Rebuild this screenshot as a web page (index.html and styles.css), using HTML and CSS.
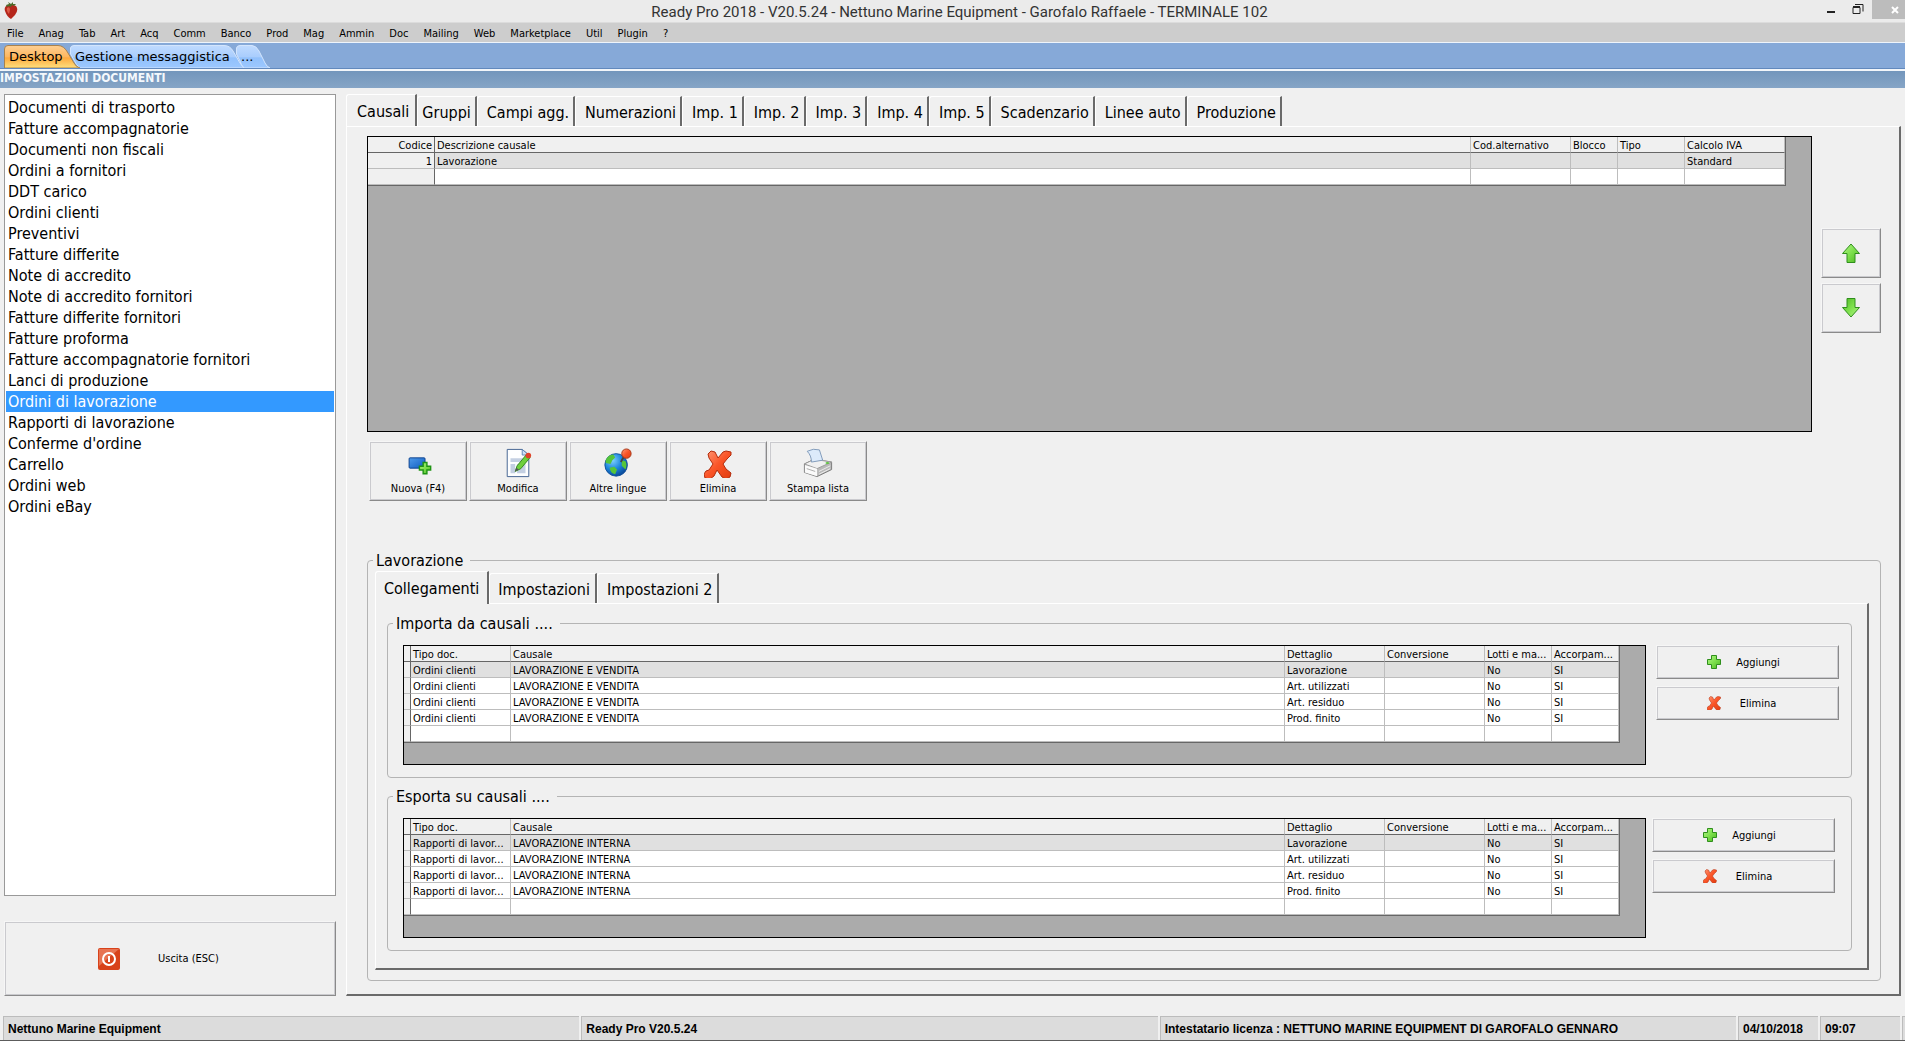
FILE: index.html
```html
<!DOCTYPE html>
<html lang="it">
<head>
  <meta charset="UTF-8">
  <meta name="viewport" content="width=device-width, initial-scale=1.0">
  <title>Ready Pro 2018 - Impostazioni documenti</title>
  <link rel="stylesheet" href="styles.css">
</head>
<body>
  <!-- shared icons -->
  <svg class="sprite" aria-hidden="true">
    <defs>
      <linearGradient id="green" x1="0" y1="0" x2="1" y2="1">
        <stop offset="0" stop-color="#b4f58a"/>
        <stop offset="0.5" stop-color="#7de04c"/>
        <stop offset="1" stop-color="#4cb522"/>
      </linearGradient>
      <linearGradient id="red" x1="0" y1="0" x2="1" y2="1">
        <stop offset="0" stop-color="#ff9a78"/>
        <stop offset="0.5" stop-color="#fa5528"/>
        <stop offset="1" stop-color="#e03c10"/>
      </linearGradient>
      <linearGradient id="blue" x1="0" y1="0" x2="1" y2="1">
        <stop offset="0" stop-color="#4f9bea"/>
        <stop offset="1" stop-color="#0f5cc0"/>
      </linearGradient>
      <linearGradient id="orangeTab" x1="0" y1="0" x2="0" y2="1">
        <stop offset="0" stop-color="#fdcf94"/>
        <stop offset="0.5" stop-color="#fdb75f"/>
        <stop offset="0.55" stop-color="#fda93f"/>
        <stop offset="1" stop-color="#fee07e"/>
      </linearGradient>
      <linearGradient id="blueTab" x1="0" y1="0" x2="0" y2="1">
        <stop offset="0" stop-color="#c0dbff"/>
        <stop offset="0.5" stop-color="#a9cdfd"/>
        <stop offset="0.55" stop-color="#91c0fb"/>
        <stop offset="1" stop-color="#9cc8ff"/>
      </linearGradient>
      <radialGradient id="sea" cx="0.35" cy="0.3" r="0.8">
        <stop offset="0" stop-color="#7fd0ff"/>
        <stop offset="0.5" stop-color="#1b86dc"/>
        <stop offset="1" stop-color="#063c8c"/>
      </radialGradient>
    </defs>
    <symbol id="plus" viewBox="0 0 14 14">
      <path d="M4.5 0.5h5v4h4v5h-4v4h-5v-4h-4v-5h4z" fill="url(#green)" stroke="#2f8f1c"/>
    </symbol>
    <symbol id="cross" viewBox="0 0 28 28">
      <path d="M4 4 7 1l4 1 3 6 5-6 3-1 5 1v3l-4 4-4 5 3 5 5 4-1 4-4 2-4-2-5-7-3 6-4 3-5-1-1-4 2-3 3-1 4-6-4-6z" fill="url(#red)" stroke="#b32c0c" stroke-linejoin="round"/>
    </symbol>
    <symbol id="arrow" viewBox="0 0 20 20">
      <path d="M10 1 18.500 10.500H14V19.500H6V10.500H1.500z" fill="url(#green)" stroke="#2f8f1c"/>
    </symbol>
  </svg>

  <header class="titlebar">
    <svg class="logo" viewBox="0 0 14 18">
      <path d="M2 4Q7 1 12 4 15 8 11 13L7 17Q3 15 1 9 0 6 2 4z" fill="#b5261b"/>
      <path d="M3 6Q6 4 6 8L5 12Q2 9 3 6z" fill="#dc5a47"/>
      <path d="M2 3 5 2 4 0 7 2 9 0 9 2 12 2 10 4 8 3 7 5 5 4 3 5z" fill="#4d6b2a"/>
    </svg>
    <h1>Ready Pro 2018 - V20.5.24 - Nettuno Marine Equipment - Garofalo Raffaele - TERMINALE 102</h1>
    <div class="window-buttons">
      <button aria-label="Riduci a icona"><svg width="10" height="12" viewBox="0 0 10 12"><path d="M1 8h8v2H1z" fill="#222"/></svg></button>
      <button aria-label="Ripristina"><svg width="12" height="12" viewBox="0 0 12 12"><path d="M1 4.500h7v6H1zM1 3.500h7M3 1.500h8v7" fill="none" stroke="#222"/></svg></button>
      <button class="close" aria-label="Chiudi"><svg width="8" height="8" viewBox="0 0 8 8"><path d="M1 1 7 7M7 1 1 7" stroke="#fff" stroke-width="2"/></svg></button>
    </div>
  </header>

  <nav class="menubar">
    <a href="#">File</a>
    <a href="#">Anag</a>
    <a href="#">Tab</a>
    <a href="#">Art</a>
    <a href="#">Acq</a>
    <a href="#">Comm</a>
    <a href="#">Banco</a>
    <a href="#">Prod</a>
    <a href="#">Mag</a>
    <a href="#">Ammin</a>
    <a href="#">Doc</a>
    <a href="#">Mailing</a>
    <a href="#">Web</a>
    <a href="#">Marketplace</a>
    <a href="#">Util</a>
    <a href="#">Plugin</a>
    <a href="#">?</a>
  </nav>

  <div class="desktop-tabs">
    <button class="dtab dtab-active">
      <svg width="76" height="23" viewBox="0 0 76 23"><path d="M0.500 23V4Q0.500 0.500 4 0.500H54Q60 0.500 64 8L70 18Q72 22 76 23z" fill="url(#orangeTab)" stroke="#a8824e"/></svg>
      <span>Desktop</span>
    </button>
    <button class="dtab dtab-wide">
      <svg width="176" height="23" viewBox="0 0 176 23"><path d="M0.500 3Q1 0.500 4 0.500H154Q160 0.500 163 6L170 18Q172 22 176 23H10Q6 20 4 15L0.500 9z" fill="url(#blueTab)" stroke="#d3e5fd"/></svg>
      <span>Gestione messaggistica</span>
    </button>
    <button class="dtab dtab-more">
      <svg width="34" height="23" viewBox="0 0 34 23"><path d="M0.500 9V3Q1 0.500 4 0.500H16Q20 0.500 23 6L29 18Q31 22 34 23H8Q5 20 4 16z" fill="url(#blueTab)" stroke="#d3e5fd"/></svg>
      <span>...</span>
    </button>
  </div>

  <h2 class="section-title">IMPOSTAZIONI DOCUMENTI</h2>

  <main>
    <aside class="sidebar">
      <ul class="doc-list">
        <li><a href="#">Documenti di trasporto</a></li>
        <li><a href="#">Fatture accompagnatorie</a></li>
        <li><a href="#">Documenti non fiscali</a></li>
        <li><a href="#">Ordini a fornitori</a></li>
        <li><a href="#">DDT carico</a></li>
        <li><a href="#">Ordini clienti</a></li>
        <li><a href="#">Preventivi</a></li>
        <li><a href="#">Fatture differite</a></li>
        <li><a href="#">Note di accredito</a></li>
        <li><a href="#">Note di accredito fornitori</a></li>
        <li><a href="#">Fatture differite fornitori</a></li>
        <li><a href="#">Fatture proforma</a></li>
        <li><a href="#">Fatture accompagnatorie fornitori</a></li>
        <li><a href="#">Lanci di produzione</a></li>
        <li><a href="#" class="selected">Ordini di lavorazione</a></li>
        <li><a href="#">Rapporti di lavorazione</a></li>
        <li><a href="#">Conferme d'ordine</a></li>
        <li><a href="#">Carrello</a></li>
        <li><a href="#">Ordini web</a></li>
        <li><a href="#">Ordini eBay</a></li>
      </ul>
      <button class="btn exit">
        <svg width="22" height="22" viewBox="0 0 22 22">
          <rect width="22" height="22" rx="2" fill="#d8421a"/>
          <path d="M1 1h20L1 18z" fill="#ee8a6c" opacity="0.7"/>
          <circle cx="11" cy="11" r="6" fill="none" stroke="#fff" stroke-width="2"/>
          <path d="M11 8v6" stroke="#fff" stroke-width="2"/>
        </svg>
        <span>Uscita (ESC)</span>
      </button>
    </aside>

    <section class="workspace">
      <div class="tabs">
        <button class="tab active">Causali</button>
        <button class="tab">Gruppi</button>
        <button class="tab">Campi agg.</button>
        <button class="tab">Numerazioni</button>
        <button class="tab">Imp. 1</button>
        <button class="tab">Imp. 2</button>
        <button class="tab">Imp. 3</button>
        <button class="tab">Imp. 4</button>
        <button class="tab">Imp. 5</button>
        <button class="tab">Scadenzario</button>
        <button class="tab">Linee auto</button>
        <button class="tab">Produzione</button>
      </div>

      <div class="panel panel-main">
        <div class="causali">
          <div class="grid-box">
            <table class="grid">
              <colgroup>
                <col class="w-67"><col><col class="w-100"><col class="w-47"><col class="w-67"><col class="w-100">
              </colgroup>
              <thead>
                <tr><th class="num">Codice</th><th>Descrizione causale</th><th>Cod.alternativo</th><th>Blocco</th><th>Tipo</th><th>Calcolo IVA</th></tr>
              </thead>
              <tbody>
                <tr class="current"><td class="num">1</td><td>Lavorazione</td><td></td><td></td><td></td><td>Standard</td></tr>
                <tr><td></td><td></td><td></td><td></td><td></td><td></td></tr>
              </tbody>
            </table>
          </div>
          <div class="order-buttons">
            <button class="btn" aria-label="Sposta su"><svg width="20" height="20"><use href="#arrow"/></svg></button>
            <button class="btn" aria-label="Sposta giù"><svg class="down" width="20" height="20"><use href="#arrow"/></svg></button>
          </div>
        </div>

        <div class="toolbar">
          <button class="btn">
            <svg width="32" height="32" viewBox="0 0 32 32">
              <rect x="6.500" y="10.500" width="17" height="11" rx="1" fill="url(#blue)" stroke="#0b3f8c"/>
              <path d="M21.500 15.500h4v4h4v4h-4v4h-4v-4h-4v-4h4z" fill="url(#green)" stroke="#1f9413" stroke-width="1.500"/>
            </svg>
            <span>Nuova (F4)</span>
          </button>
          <button class="btn">
            <svg width="32" height="32" viewBox="0 0 32 32">
              <path d="M4.500 1.500h16l7 6v23h-23z" fill="#fdfeff" stroke="#3f5f8f"/>
              <path d="M20.500 1.500v6h7z" fill="#cfe0f5" stroke="#5f86b8"/>
              <path d="M8 11h15v4H8zM8 17h5v10H8zM15 17h9v10h-9z" fill="#c3cfe2"/>
              <path d="M13 25 15 19 25 7 29 10 19 22z" fill="#6fd03e" stroke="#33861f"/>
              <path d="M13 25 14 21 17 23z" fill="#555"/>
              <circle cx="27" cy="8" r="3" fill="#e0432a"/>
            </svg>
            <span>Modifica</span>
          </button>
          <button class="btn">
            <svg width="32" height="32" viewBox="0 0 32 32">
              <circle cx="14" cy="18" r="12" fill="url(#sea)" stroke="#10509c"/>
              <path d="M4 11Q7 7 11 7L13 10 10 13 8 17 3 16Q2 14 4 11zM20 13 24 14Q26 18 24 23L20 19zM7 21 12 20 15 23 13 28Q8 27 7 21z" fill="#55c53a"/>
              <path d="M19 15 23 8" stroke="#444" stroke-width="2"/>
              <circle cx="25" cy="6" r="5" fill="url(#red)" stroke="#a3371a"/>
            </svg>
            <span>Altre lingue</span>
          </button>
          <button class="btn">
            <svg width="32" height="32"><use href="#cross" x="2" y="2" width="28" height="28"/></svg>
            <span>Elimina</span>
          </button>
          <button class="btn">
            <svg width="32" height="32" viewBox="0 0 32 32">
              <path d="M1.500 17 12 12 30.500 15V23L15 30.500 1.500 26z" fill="#b9b9b9" stroke="#777"/>
              <path d="M1.500 17 12 12 30.500 15 15 22z" fill="#f0f0f0" stroke="#999"/>
              <path d="M2 18 15 22V30L2 26z" fill="#fafafa"/>
              <path d="M4 22 13 25" stroke="#aaa"/>
              <path d="M17 25 29 19M17 28 29 22" stroke="#eee"/>
              <path d="M4.500 3.500Q11 0 17.500 2L21 13 9 15Q9 8 4.500 3.500z" fill="#dceafa" stroke="#7d98b8"/>
              <ellipse cx="26" cy="16" rx="2" ry="1" fill="#5fc340"/>
            </svg>
            <span>Stampa lista</span>
          </button>
        </div>

        <fieldset class="group lavorazione">
          <legend>Lavorazione</legend>
          <div class="tabs">
            <button class="tab active">Collegamenti</button>
            <button class="tab">Impostazioni</button>
            <button class="tab">Impostazioni 2</button>
          </div>
          <div class="panel panel-links">
            <fieldset class="group link-group">
              <legend>Importa da causali ....</legend>
              <div class="grid-box">
                <table class="grid">
                  <colgroup>
                    <col class="w-7"><col class="w-100"><col><col class="w-100"><col class="w-100"><col class="w-67"><col class="w-67">
                  </colgroup>
                  <thead>
                    <tr><th></th><th>Tipo doc.</th><th>Causale</th><th>Dettaglio</th><th>Conversione</th><th>Lotti e ma...</th><th>Accorpam...</th></tr>
                  </thead>
                  <tbody>
                    <tr class="current"><td></td><td>Ordini clienti</td><td>LAVORAZIONE E VENDITA</td><td>Lavorazione</td><td></td><td>No</td><td>SI</td></tr>
                    <tr><td></td><td>Ordini clienti</td><td>LAVORAZIONE E VENDITA</td><td>Art. utilizzati</td><td></td><td>No</td><td>SI</td></tr>
                    <tr><td></td><td>Ordini clienti</td><td>LAVORAZIONE E VENDITA</td><td>Art. residuo</td><td></td><td>No</td><td>SI</td></tr>
                    <tr><td></td><td>Ordini clienti</td><td>LAVORAZIONE E VENDITA</td><td>Prod. finito</td><td></td><td>No</td><td>SI</td></tr>
                    <tr><td></td><td></td><td></td><td></td><td></td><td></td><td></td></tr>
                  </tbody>
                </table>
              </div>
              <div class="side-buttons">
                <button class="btn"><svg width="14" height="14"><use href="#plus"/></svg><span>Aggiungi</span></button>
                <button class="btn"><svg width="14" height="14"><use href="#cross"/></svg><span>Elimina</span></button>
              </div>
            </fieldset>

            <fieldset class="group link-group export">
              <legend>Esporta su causali ....</legend>
              <div class="grid-box">
                <table class="grid">
                  <colgroup>
                    <col class="w-7"><col class="w-100"><col><col class="w-100"><col class="w-100"><col class="w-67"><col class="w-67">
                  </colgroup>
                  <thead>
                    <tr><th></th><th>Tipo doc.</th><th>Causale</th><th>Dettaglio</th><th>Conversione</th><th>Lotti e ma...</th><th>Accorpam...</th></tr>
                  </thead>
                  <tbody>
                    <tr class="current"><td></td><td>Rapporti di lavor...</td><td>LAVORAZIONE INTERNA</td><td>Lavorazione</td><td></td><td>No</td><td>SI</td></tr>
                    <tr><td></td><td>Rapporti di lavor...</td><td>LAVORAZIONE INTERNA</td><td>Art. utilizzati</td><td></td><td>No</td><td>SI</td></tr>
                    <tr><td></td><td>Rapporti di lavor...</td><td>LAVORAZIONE INTERNA</td><td>Art. residuo</td><td></td><td>No</td><td>SI</td></tr>
                    <tr><td></td><td>Rapporti di lavor...</td><td>LAVORAZIONE INTERNA</td><td>Prod. finito</td><td></td><td>No</td><td>SI</td></tr>
                    <tr><td></td><td></td><td></td><td></td><td></td><td></td><td></td></tr>
                  </tbody>
                </table>
              </div>
              <div class="side-buttons">
                <button class="btn"><svg width="14" height="14"><use href="#plus"/></svg><span>Aggiungi</span></button>
                <button class="btn"><svg width="14" height="14"><use href="#cross"/></svg><span>Elimina</span></button>
              </div>
            </fieldset>
          </div>
        </fieldset>
      </div>
    </section>
  </main>

  <footer class="statusbar">
    <div>Nettuno Marine Equipment</div>
    <div>Ready Pro V20.5.24</div>
    <div>Intestatario licenza : NETTUNO MARINE EQUIPMENT DI GAROFALO GENNARO</div>
    <div>04/10/2018</div>
    <div>09:07</div>
    <div></div>
  </footer>
</body>
</html>
```
FILE: styles.css
```css
* {
  box-sizing: border-box;
}
body {
  display: flex;
  flex-direction: column;
  min-height: 100vh;
  margin: 0;
  background-color: #f0f0f0;
  color: #000;
  border-bottom: 1px solid #5c5c5c;
  font-family: "DejaVu Sans Condensed", "DejaVu Sans", sans-serif;
  font-size: 11px;
}
a {
  color: inherit;
  text-decoration: none;
}
button {
  font: inherit;
  color: inherit;
  padding: 0;
  border: none;
  background: none;
}
svg {
  display: block;
}
.sprite {
  position: absolute;
  width: 0;
  height: 0;
}

/* title bar */
.titlebar {
  display: grid;
  grid-template-columns: 120px 1fr 106px;
  height: 23px;
  background-color: #ebebeb;
  border-bottom: 1px solid #dcdcdc;
}
.logo {
  width: 14px;
  height: 18px;
  margin: 2px 0 0 4px;
}
.titlebar h1 {
  margin: 0;
  font: 15px/24px Roboto, sans-serif;
  color: #333;
  text-align: center;
}
.window-buttons {
  display: flex;
  justify-content: flex-end;
  align-items: flex-start;
  gap: 16px;
}
.window-buttons button {
  padding-top: 3px;
}
.window-buttons .close {
  width: 33px;
  height: 19px;
  padding: 0 0 0 19px;
  margin-left: -8px;
  background-color: #bcbcbc;
}

.menubar {
  display: flex;
  gap: 15px;
  height: 19px;
  padding-left: 7px;
  background-color: #cdcdcd;
  line-height: 21px;
}

/* open windows */
.desktop-tabs {
  display: flex;
  align-items: flex-end;
  height: 27px;
  padding-left: 4px;
  background-color: #86a9d8;
  border-top: 1px solid #eef4fb;
  border-bottom: 1px solid #6289bd;
  font: 13px/22px "DejaVu Sans", sans-serif;
}
.dtab {
  position: relative;
  height: 23px;
  text-align: left;
}
.dtab svg {
  position: absolute;
  top: 0;
  left: 0;
}
.dtab span {
  position: relative;
  padding-left: 5px;
}
.dtab-active {
  z-index: 1;
  width: 66px;
}
.dtab-wide {
  width: 166px;
}
.dtab-more {
  width: 34px;
}

.section-title {
  height: 19px;
  margin: 0;
  border-top: 2px solid #f2f6fa;
  background: linear-gradient(#7396bc, #86a5c6);
  color: #f4f8fc;
  font-size: 12px;
  line-height: 14px;
}

main {
  display: flex;
  flex: 1;
  gap: 10px;
  padding: 6px 4px 20px;
}

/* documents list */
.sidebar {
  display: flex;
  flex-direction: column;
  gap: 25px;
  width: 332px;
}
.doc-list {
  flex: 1;
  margin: 0;
  padding: 2px 1px;
  border: 1px solid #999;
  background-color: #fff;
  list-style: none;
  font-size: 16px;
}
.doc-list a {
  display: block;
  padding-left: 2px;
  line-height: 21px;
}
.doc-list .selected {
  background-color: #3399ff;
  color: #fff;
}

/* raised button */
.btn {
  border: 1px solid;
  border-color: #f6f6f6 #8a8a8a #8a8a8a #f6f6f6;
  box-shadow: inset 0 0 0 1px #cacace;
}
.exit {
  display: flex;
  align-items: center;
  gap: 38px;
  height: 75px;
  padding-left: 93px;
}

/* tabs */
.tabs {
  display: flex;
  align-items: flex-end;
  height: 32px;
  font-size: 16px;
}
.tab {
  height: 30px;
  padding: 2px 4px 0 9px;
  border-top: 1px solid #fff;
  border-left: 1px solid #fff;
  border-right: 2px solid #6a6a6a;
  border-radius: 3px 0 0 0;
  white-space: nowrap;
}
.tab.active {
  height: 33px;
  margin-bottom: -1px;
  padding: 0 6px 0 10px;
  background-color: #f0f0f0;
}
.tab.active + .tab {
  padding-left: 4px;
}
.panel {
  border-top: 1px solid #fff;
  border-left: 1px solid #fff;
  border-right: 2px solid #6a6a6a;
  border-bottom: 2px solid #6a6a6a;
}
.workspace {
  display: flex;
  flex: 1;
  flex-direction: column;
  min-width: 0;
}
.panel-main {
  display: flex;
  flex: 1;
  flex-direction: column;
  padding: 9px 18px 13px 20px;
}

/* data grids */
.causali {
  display: flex;
  flex: 1;
  gap: 9px;
}
.grid-box {
  flex: 1;
  min-width: 0;
  padding-right: 25px;
  border: 1px solid #000;
  background-color: #ababab;
}
.grid {
  width: 100%;
  table-layout: fixed;
  border-collapse: separate;
  border-spacing: 0;
  border-right: 1px solid #666;
  border-bottom: 1px solid #666;
  background-color: #fff;
}
.grid th,
.grid td {
  height: 16px;
  padding: 2px 2px 0;
  border-right: 1px solid #bdbdbd;
  border-bottom: 1px solid #bdbdbd;
  font-weight: normal;
  line-height: 13px;
  text-align: left;
  white-space: nowrap;
  overflow: hidden;
}
.grid th {
  background-color: #f0f0f0;
  border-bottom-color: #666;
}
.grid th:first-child,
.grid td:first-child {
  background-color: #f0f0f0;
  border-right-color: #666;
}
.grid .num {
  text-align: right;
}
.grid .current td:not(:first-child) {
  background-color: #e0e0e0;
}
.w-7 {
  width: 7px;
}
.w-47 {
  width: 47px;
}
.w-67 {
  width: 67px;
}
.w-100 {
  width: 100px;
}

.order-buttons {
  display: flex;
  flex-direction: column;
  gap: 5px;
  padding-top: 92px;
}
.order-buttons .btn {
  display: grid;
  place-items: center;
  width: 60px;
  height: 50px;
}
.down {
  transform: rotate(180deg);
}

.toolbar {
  display: flex;
  gap: 2px;
  padding: 9px 0 49px 2px;
}
.toolbar .btn {
  display: flex;
  flex-direction: column;
  align-items: center;
  width: 98px;
  height: 60px;
  padding-top: 6px;
}
.toolbar span {
  line-height: 22px;
}

/* group boxes */
.group {
  min-width: 0;
  margin: 0;
  border: 1px solid #b4b4b4;
  border-radius: 4px;
}
.group legend {
  height: 20px;
  padding: 0 7px 0 3px;
  font-size: 16px;
  line-height: 22px;
}
.lavorazione {
  padding: 1px 11px 10px 7px;
}
.lavorazione > legend {
  margin-left: -2px;
}
.lavorazione .tab {
  padding-right: 5px;
}
.lavorazione .tab.active,
.lavorazione .tab.active + .tab {
  padding-left: 8px;
}
.lavorazione .tab.active {
  padding-right: 8px;
}
.panel-links {
  padding: 9px 15px 17px 11px;
}
.link-group {
  display: flex;
  gap: 10px;
  padding: 12px 12px 12px 15px;
}
.link-group legend {
  margin-left: -10px;
}
.link-group .grid-box {
  height: 120px;
}
.export {
  gap: 6px;
  margin-top: 8px;
  padding-right: 16px;
}
.side-buttons {
  display: flex;
  flex-direction: column;
  gap: 7px;
}
.side-buttons .btn {
  display: grid;
  grid-template-columns: 14px 50px;
  align-items: center;
  gap: 12px;
  width: 183px;
  height: 34px;
  padding-left: 50px;
}

/* status bar */
.statusbar {
  display: grid;
  grid-template-columns: 1fr 1fr 1fr 80px 80px 3px;
  gap: 2px;
  height: 24px;
  padding-left: 3px;
  font: bold 12px/24px "Liberation Sans", sans-serif;
}
.statusbar div {
  padding-left: 4px;
  border-top: 1px solid #bcbcbc;
  border-left: 1px solid #bcbcbc;
  background-color: #dcdcdc;
  white-space: nowrap;
  overflow: hidden;
}
```
